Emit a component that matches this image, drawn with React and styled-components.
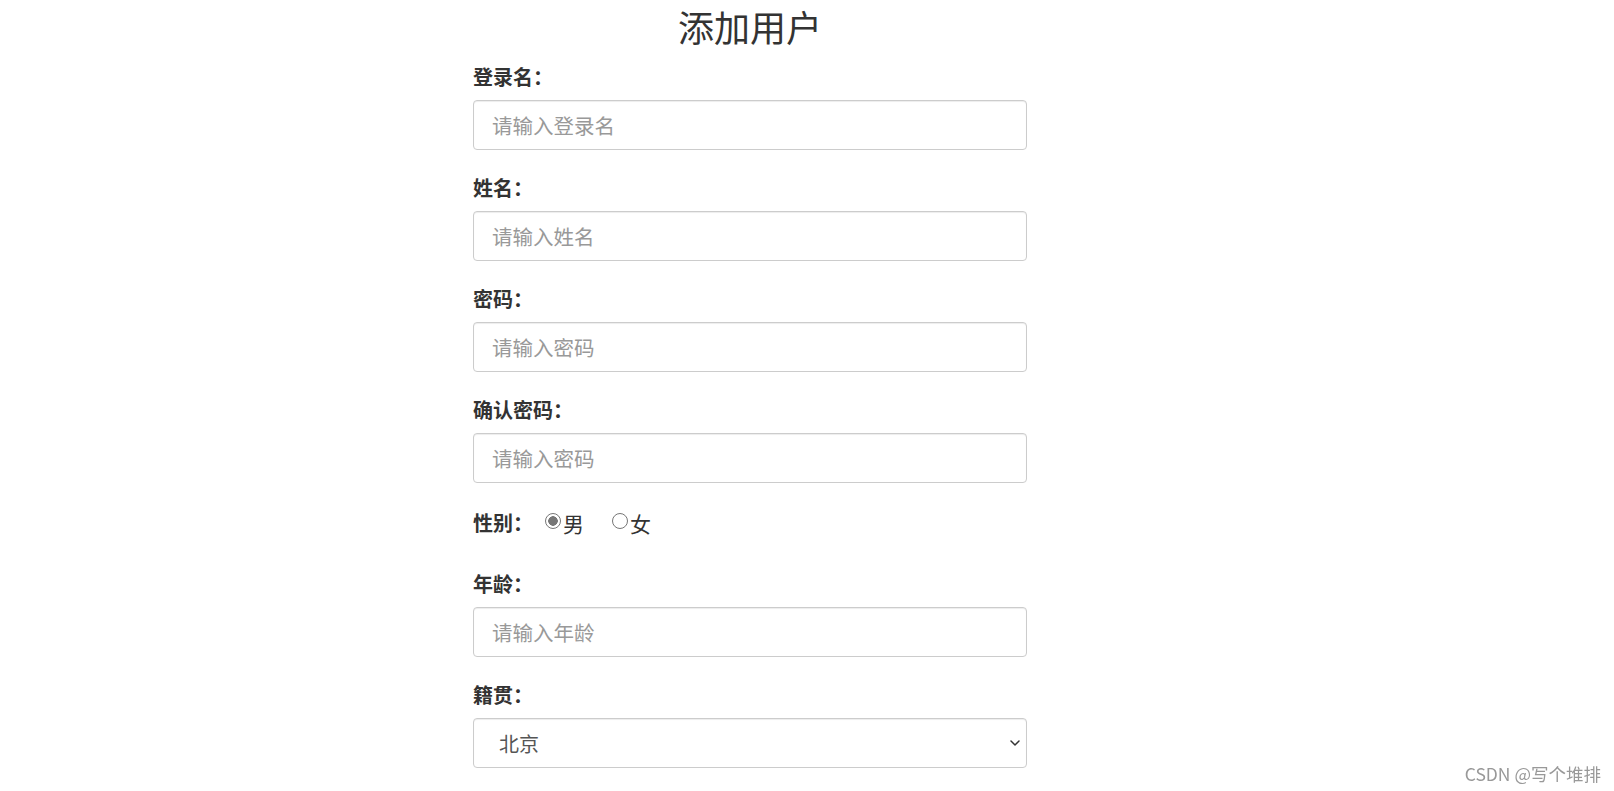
import styled, { createGlobalStyle } from 'styled-components';
import { ChevronDown } from 'lucide-react';

const GlobalStyle = createGlobalStyle`
  body {
    margin: 0;
    background: #fff;
    font-family: "Noto Sans CJK SC", "Noto Sans", "Liberation Sans", sans-serif;
    color: #333;
  }
  * {
    box-sizing: border-box;
  }
`;

const App = () => {
  return (
    <>
      <GlobalStyle />
      <Page>
        <Form>
          <Title>添加用户</Title>
          <Group>
            <Label>登录名：</Label>
            <Input type='text' placeholder='请输入登录名' />
          </Group>
          <Group>
            <Label>姓名：</Label>
            <Input type='text' placeholder='请输入姓名' />
          </Group>
          <Group>
            <Label>密码：</Label>
            <Input type='password' placeholder='请输入密码' />
          </Group>
          <Group>
            <Label>确认密码：</Label>
            <Input type='password' placeholder='请输入密码' />
          </Group>
          <RadioGroup>
            <Label>性别：</Label>
            <RadioLabel>
              <Radio type='radio' name='sex' defaultChecked />男
            </RadioLabel>
            <RadioLabel>
              <Radio type='radio' name='sex' />女
            </RadioLabel>
          </RadioGroup>
          <Group>
            <Label>年龄：</Label>
            <Input type='text' placeholder='请输入年龄' />
          </Group>
          <Group>
            <Label>籍贯：</Label>
            <SelectBox>
              <Select defaultValue='北京'>
                <option>北京</option>
                <option>上海</option>
                <option>广州</option>
              </Select>
              <Arrow size={16} strokeWidth={2.2} />
            </SelectBox>
          </Group>
        </Form>
      </Page>
      <Watermark>CSDN @写个堆排</Watermark>
    </>
  );
};

const Page = styled.div`
  display: flex;
  padding-left: 473px;
  min-height: 791px;
`;

const Form = styled.form`
  width: 554px;
  display: flex;
  flex-direction: column;
`;

//Title
const Title = styled.h1`
  margin: 6px 0 18px;
  font-size: 36px;
  font-weight: 400;
  line-height: 40px;
  text-align: center;
  color: #333;
`;

//Fields
const Group = styled.div`
  display: flex;
  flex-direction: column;
  margin-bottom: 25px;
`;

const Label = styled.label`
  display: inline-block;
  margin-bottom: 10px;
  font-size: 20px;
  font-weight: 700;
  line-height: 26px;
  color: #333;
`;

const Input = styled.input`
  width: 100%;
  height: 50px;
  padding: 0 18px;
  font-family: inherit;
  font-size: 20.5px;
  color: #555;
  background: #fff;
  border: 1px solid #ccc;
  border-radius: 4px;
  box-shadow: inset 0 1px 1px rgba(0, 0, 0, 0.075);
  outline: none;

  &::placeholder {
    color: #999;
  }
`;

//Radio
const RadioGroup = styled.div`
  display: flex;
  align-items: flex-start;
  padding-top: 2px;
  margin-bottom: 25px;
`;

const RadioLabel = styled.label`
  display: flex;
  align-items: center;
  height: 26px;
  margin-left: 12px;
  margin-right: 16px;
  font-size: 21px;
  color: #333;
`;

const Radio = styled.input`
  appearance: none;
  width: 16px;
  height: 16px;
  margin: 0 2px 5px 0;
  border: 1.5px solid #767676;
  border-radius: 50%;
  background: #fff;

  &:checked {
    background: radial-gradient(circle, #767676 0 4.5px, #fff 5px);
  }
`;

//Select
const SelectBox = styled.div`
  position: relative;
  width: 100%;
`;

const Select = styled.select`
  width: 100%;
  height: 50px;
  padding: 0 40px 0 25px;
  appearance: none;
  font-family: inherit;
  font-size: 20px;
  color: #555;
  background: #fff;
  border: 1px solid #ccc;
  border-radius: 4px;
  box-shadow: inset 0 1px 1px rgba(0, 0, 0, 0.075);
  outline: none;
`;

const Arrow = styled(ChevronDown)`
  position: absolute;
  right: 4px;
  top: 17px;
  color: #333;
  pointer-events: none;
`;

const Watermark = styled.div`
  position: fixed;
  right: 13px;
  bottom: 5px;
  font-family: "Noto Sans CJK SC", "Liberation Sans", sans-serif;
  font-size: 17.5px;
  color: #999;
`;

export default App;
